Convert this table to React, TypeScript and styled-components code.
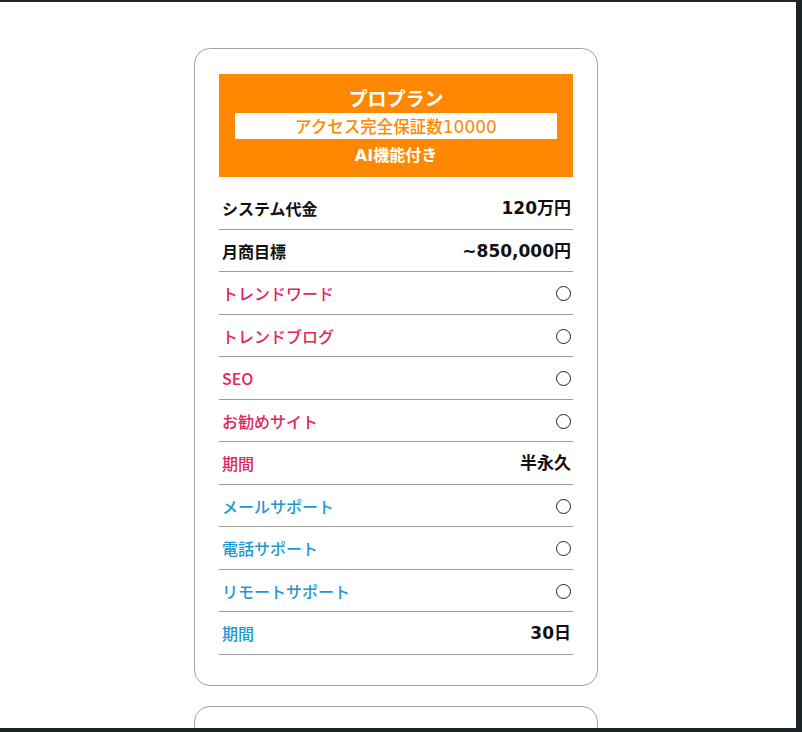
import styled, { createGlobalStyle } from 'styled-components';

type Tone = 'dark' | 'red' | 'blue';

interface PlanRow {
  label: string;
  tone: Tone;
  value?: string; // 値がなければ丸印
}

const rows: PlanRow[] = [
  { label: 'システム代金', tone: 'dark', value: '120万円' },
  { label: '月商目標', tone: 'dark', value: '~850,000円' },
  { label: 'トレンドワード', tone: 'red' },
  { label: 'トレンドブログ', tone: 'red' },
  { label: 'SEO', tone: 'red' },
  { label: 'お勧めサイト', tone: 'red' },
  { label: '期間', tone: 'red', value: '半永久' },
  { label: 'メールサポート', tone: 'blue' },
  { label: '電話サポート', tone: 'blue' },
  { label: 'リモートサポート', tone: 'blue' },
  { label: '期間', tone: 'blue', value: '30日' },
];

const toneColor: Record<Tone, string> = {
  dark: '#111111',
  red: '#e3265b',
  blue: '#1c98d5',
};

const cjkFont = `"Noto Sans CJK JP", "Noto Sans", sans-serif`;
const mixedFont = `"DejaVu Sans", "Noto Sans CJK JP", sans-serif`;

export default function App() {
  return (
    <>
      <GlobalStyle />
      <Frame>
        <Page>
          <PlanCard>
            <PlanHeader>
              <PlanTitle>プロプラン</PlanTitle>
              <PlanBand>
                アクセス完全保証数<BandNum>10000</BandNum>
              </PlanBand>
              <PlanSub>AI機能付き</PlanSub>
            </PlanHeader>
            <RowList>
              {rows.map((row, i) => (
                <Row key={i}>
                  <RowLabel $tone={row.tone}>{row.label}</RowLabel>
                  {row.value ? <RowValue>{row.value}</RowValue> : <Circle />}
                </Row>
              ))}
            </RowList>
          </PlanCard>
          <PlanCard $peek />
        </Page>
      </Frame>
    </>
  );
}

const GlobalStyle = createGlobalStyle`
  html, body {
    margin: 0;
    padding: 0;
    background: #ffffff;
    overflow: hidden;
  }
  body {
    font-family: ${cjkFont};
    color: #111111;
  }
`;

const Frame = styled.div`
  box-sizing: border-box;
  width: 802px;
  height: 732px;
  border-top: 2px solid #1d2427;
  border-right: 6px solid #1d2427;
  border-bottom: 4px solid #1d2427;
  background: #ffffff;
  overflow: hidden;
`;

const Page = styled.div`
  display: flex;
  flex-direction: column;
  align-items: center;
  gap: 20px;
  padding: 46px 4px 0 0;
`;

const PlanCard = styled.div<{ $peek?: boolean }>`
  box-sizing: border-box;
  width: 404px;
  min-height: ${({ $peek }) => ($peek ? '200px' : 'auto')};
  padding: 25px 24px 30px;
  border: 1px solid #a3a3a3;
  border-radius: 16px;
  background: #ffffff;
  flex-shrink: 0;
`;

const PlanHeader = styled.div`
  display: flex;
  flex-direction: column;
  align-items: stretch;
  padding: 11px 16px 10px;
  background: #ff8800;
  color: #ffffff;
  text-align: center;
  margin-bottom: 10px;
`;

const PlanTitle = styled.div`
  font-size: 19px;
  font-weight: 700;
  line-height: 25px;
`;

const PlanBand = styled.div`
  margin: 3px 0 6px;
  height: 26px;
  line-height: 26px;
  background: #ffffff;
  color: #ff8800;
  font-size: 16.5px;
  font-weight: 500;
`;

const BandNum = styled.span`
  font-family: "DejaVu Sans", sans-serif;
  font-size: 17px;
`;

const PlanSub = styled.div`
  font-family: ${mixedFont};
  font-size: 16px;
  font-weight: 700;
  line-height: 22px;
`;

const RowList = styled.div`
  display: flex;
  flex-direction: column;
`;

const Row = styled.div`
  display: flex;
  align-items: center;
  justify-content: space-between;
  padding: 11px 2px 9px 3px;
  line-height: 21.5px;
  border-bottom: 1px solid #9c9c9c;
  font-size: 16px;
`;

const RowLabel = styled.span<{ $tone: Tone }>`
  color: ${({ $tone }) => toneColor[$tone]};
  font-weight: ${({ $tone }) => ($tone === 'dark' ? 700 : 500)};
`;

const RowValue = styled.span`
  color: #111111;
  font-family: ${mixedFont};
  font-size: 17px;
  font-weight: 700;
`;

const Circle = styled.span`
  box-sizing: border-box;
  width: 15px;
  height: 15px;
  border: 1.5px solid #222222;
  border-radius: 50%;
`;
